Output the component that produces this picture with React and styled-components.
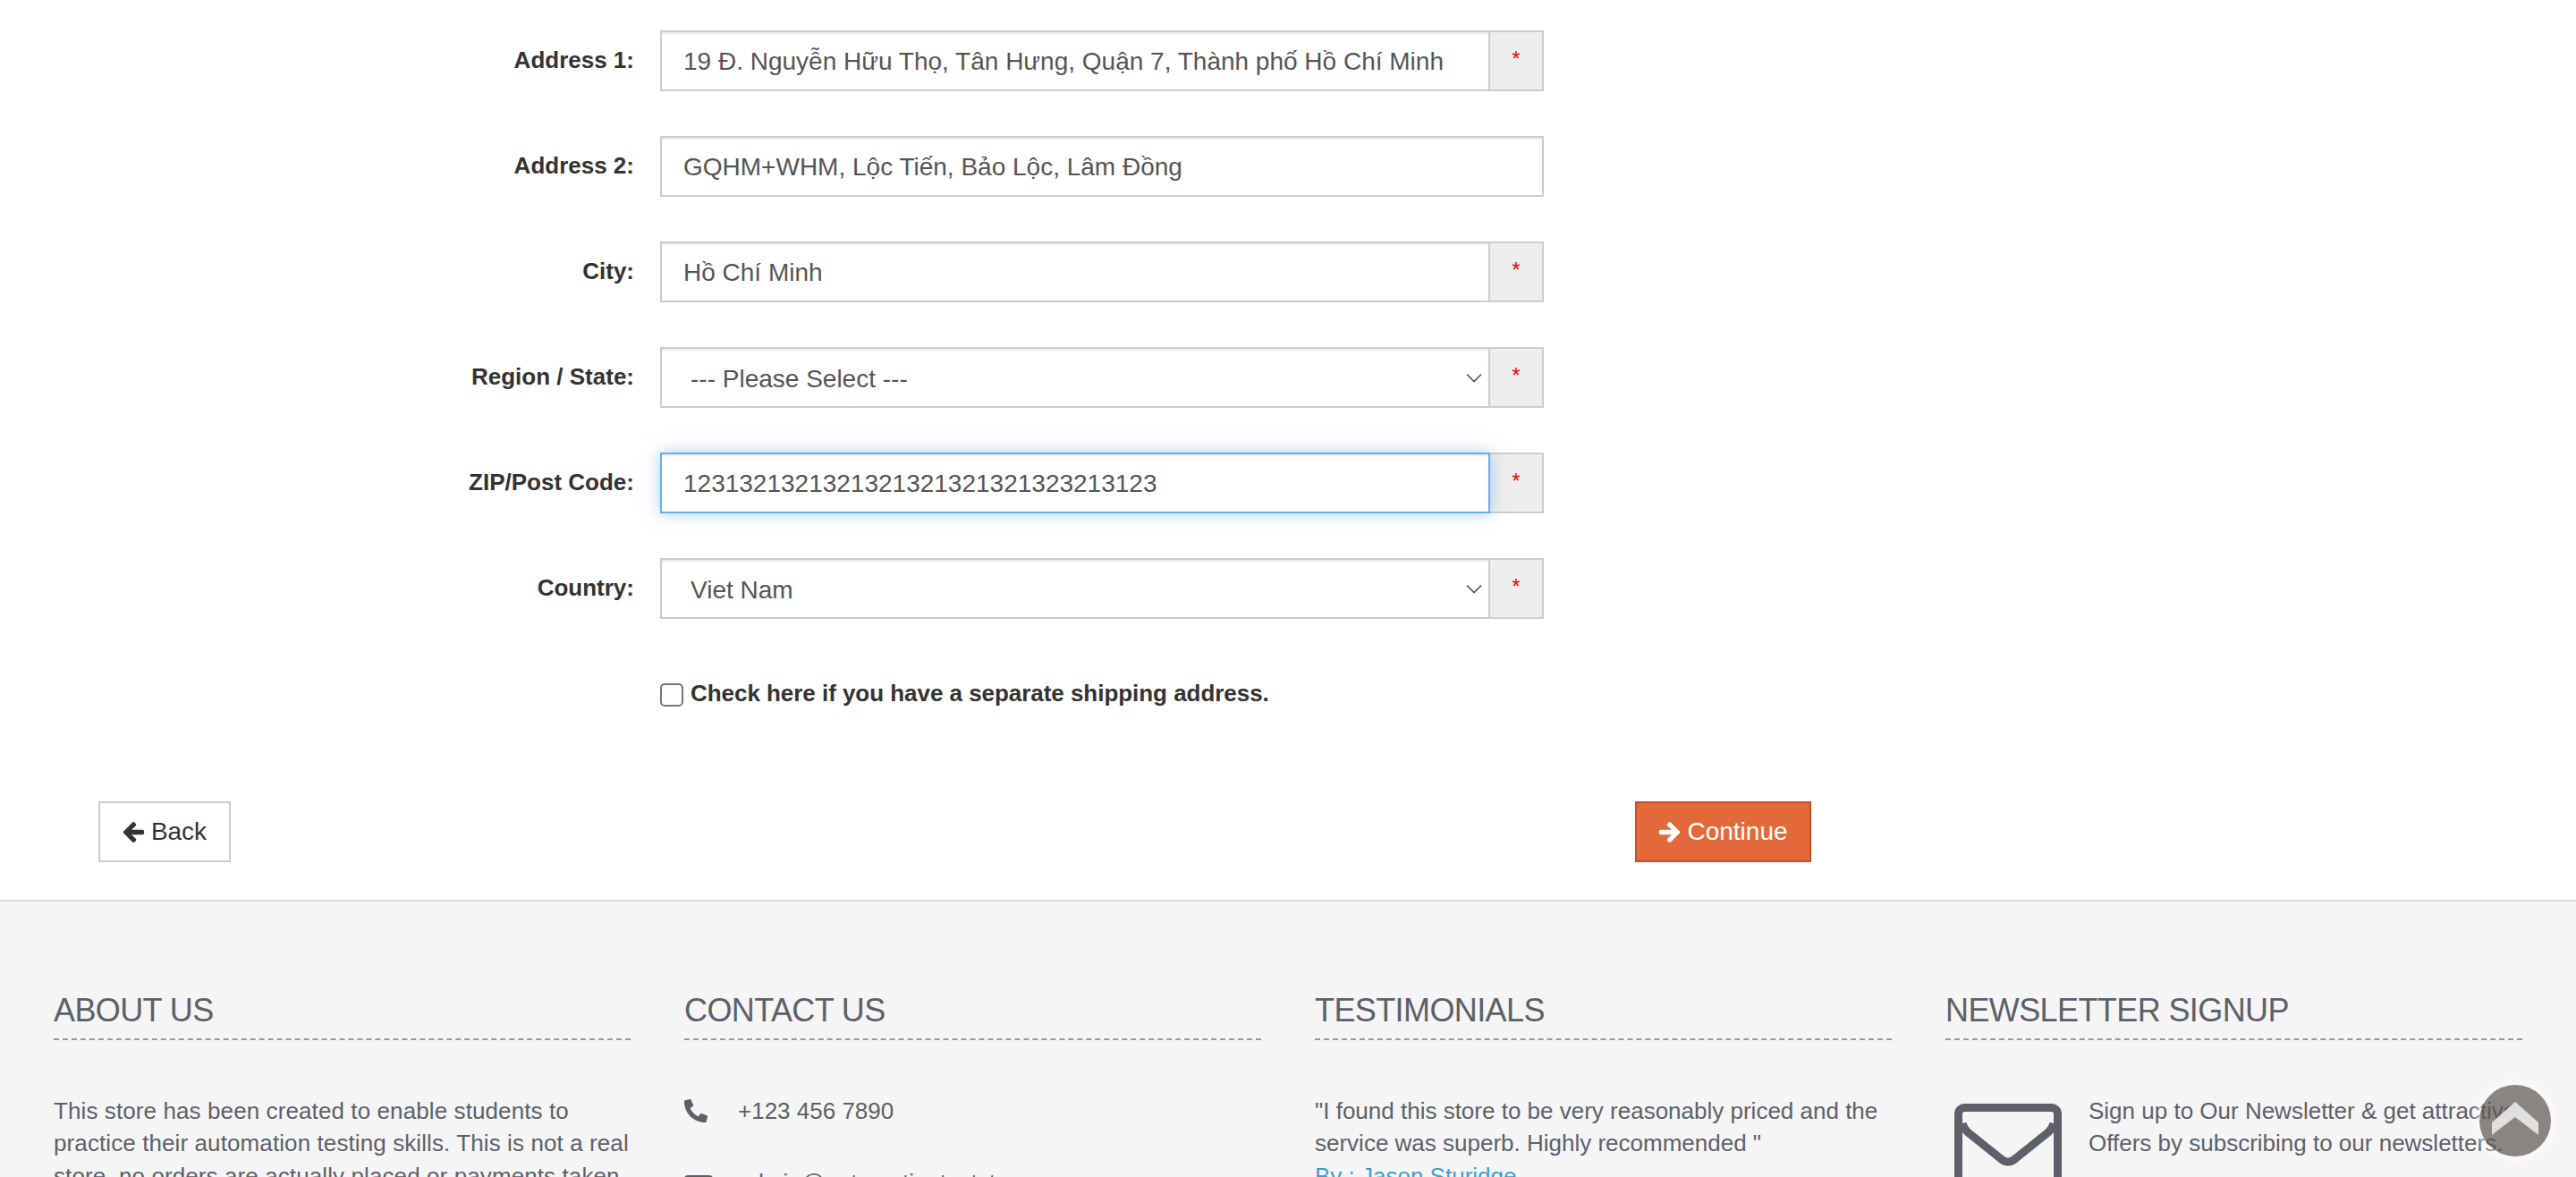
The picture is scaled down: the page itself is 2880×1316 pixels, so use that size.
import styled, { createGlobalStyle } from "styled-components";
import { FaArrowLeft, FaArrowRight, FaPhoneAlt } from "react-icons/fa";

const GlobalStyle = createGlobalStyle`
  html, body {
    margin: 0;
    padding: 0;
    background: #fff;
  }
  * {
    box-sizing: border-box;
  }
`;

const Page = styled.div`
  position: relative;
  width: 2880px;
  height: 1316px;
  overflow: hidden;
  font-family: "Liberation Sans", Arial, sans-serif;
  color: #333;
`;

const Form = styled.form`
  padding-top: 34px;
`;

const Row = styled.div`
  display: grid;
  grid-template-columns: 709px 988px;
  column-gap: 29px;
  align-items: center;
  height: 68px;
  margin-bottom: 50px;
`;

const Label = styled.label`
  text-align: right;
  font-size: 26px;
  font-weight: 700;
  color: #333;
  margin-top: -2px;
`;

const Group = styled.div`
  position: relative;
  display: flex;
  height: 68px;
`;

const Input = styled.input`
  flex: 1;
  min-width: 0;
  height: 68px;
  padding: 2px 24px 0;
  font-family: inherit;
  font-size: 28px;
  color: #555;
  background: #fff;
  border: 2px solid ${p => (p.$focused ? "#66afe9" : "#ccc")};
  box-shadow: ${p =>
    p.$focused
      ? "inset 0 2px 2px rgba(0,0,0,.075), 0 0 16px rgba(102,175,233,.6)"
      : "inset 0 2px 2px rgba(0,0,0,.075)"};
  border-radius: 0;
  outline: none;
  position: relative;
  z-index: ${p => (p.$focused ? 1 : 0)};
`;

const SelectBox = styled.div`
  position: relative;
  flex: 1;
  min-width: 0;
  height: 68px;
`;

const Select = styled.select`
  width: 100%;
  height: 68px;
  padding: 2px 24px 0 32px;
  appearance: none;
  font-family: inherit;
  font-size: 28px;
  color: #555;
  background: #fff;
  border: 2px solid #ccc;
  box-shadow: inset 0 2px 2px rgba(0,0,0,.075);
  border-radius: 0;
  outline: none;
`;

const Chevron = styled.svg`
  position: absolute;
  right: 9px;
  top: 29px;
  width: 18px;
  height: 11px;
  pointer-events: none;
`;

const Required = styled.span`
  flex: none;
  display: flex;
  justify-content: center;
  padding-top: 16px;
  margin-left: -2px;
  width: 62px;
  background: #eee;
  border: 2px solid #ccc;
  color: #f00;
  font-size: 24px;
  line-height: 28px;
`;

const CheckRow = styled.div`
  display: flex;
  align-items: center;
  margin: 72px 0 0 738px;
  height: 26px;
`;

const Check = styled.input`
  appearance: none;
  width: 26px;
  height: 26px;
  margin: 0 8px 0 0;
  background: #fff;
  border: 2px solid #767676;
  border-radius: 5px;
`;

const CheckLabel = styled.label`
  font-size: 26px;
  font-weight: 700;
  color: #333;
  margin-top: -3px;
  letter-spacing: -0.04px;
`;

const Buttons = styled.div`
  display: flex;
  justify-content: space-between;
  margin-top: 106px;
  padding: 0 855px 0 110px;
`;

const Button = styled.button`
  display: flex;
  align-items: center;
  justify-content: center;
  gap: 7px;
  height: 68px;
  width: ${p => (p.$primary ? "197px" : "148px")};
  padding: 0;
  font-family: inherit;
  font-size: 28px;
  color: ${p => (p.$primary ? "#fff" : "#333")};
  background: ${p => (p.$primary ? "#e26a3a" : "#fff")};
  border: 2px solid ${p => (p.$primary ? "#c94f26" : "#ccc")};
  border-radius: 0;

  svg {
    font-size: 25px;
    stroke: currentColor;
    stroke-width: 30px;
  }
`;

const Footer = styled.footer`
  margin-top: 42px;
  background: #f5f5f5;
  border-top: 2px solid #d9d9d9;
  padding: 101px 60px 0;
  display: grid;
  grid-template-columns: repeat(4, 645px);
  column-gap: 60px;
  color: #5d6069;
`;

const Heading = styled.h2`
  margin: 0 0 61px;
  height: 54px;
  font-size: 36px;
  line-height: 42px;
  font-weight: 400;
  letter-spacing: -0.6px;
  color: #5d6069;
  border-bottom: 2px dashed #999;
`;

const Text = styled.p`
  margin: 0;
  font-size: 26px;
  line-height: 36.4px;
`;

const AboutText = styled(Text)`
  letter-spacing: 0.1px;
`;

const ContactRow = styled.div`
  display: flex;
  align-items: center;
  height: 36px;
  margin-bottom: 44px;
  font-size: 26px;
`;

const ContactIcon = styled.span`
  display: flex;
  width: 60px;
  font-size: 26px;
`;

const MailIcon = styled.svg`
  flex: none;
  width: 32px;
  height: 32px;
  margin-top: 16px;
`;

const Author = styled.a`
  color: #3f9fc9;
  font-size: 26px;
  line-height: 36.4px;
  text-decoration: none;
`;

const Signup = styled.div`
  display: flex;
  gap: 30px;
  padding-left: 10px;
`;

const Envelope = styled.svg`
  flex: none;
  width: 120px;
  height: 120px;
  margin-top: 10px;
`;

const ScrollTop = styled.a`
  position: absolute;
  right: 28px;
  bottom: 23px;
  width: 80px;
  height: 80px;
  border-radius: 50%;
  background: rgba(92, 86, 80, 0.7);
  box-shadow: 0 0 5px 7px rgba(255, 255, 255, 0.35);
  display: flex;
  align-items: center;
  justify-content: center;
`;

const ChevronUp = styled.svg`
  width: 54px;
  height: 38px;
  margin-top: -5px;
`;

function Field({ label, value, focused, required = true }) {
  return (
    <Row>
      <Label>{label}</Label>
      <Group>
        <Input type="text" defaultValue={value} $focused={focused} />
        {required && <Required>*</Required>}
      </Group>
    </Row>
  );
}

function SelectField({ label, value }) {
  return (
    <Row>
      <Label>{label}</Label>
      <Group>
        <SelectBox>
          <Select defaultValue={value}>
            <option>{value}</option>
          </Select>
          <Chevron viewBox="0 0 18 11">
            <path d="M1 1.5 L9 9.5 L17 1.5" fill="none" stroke="#555" strokeWidth="1.6" />
          </Chevron>
        </SelectBox>
        <Required>*</Required>
      </Group>
    </Row>
  );
}

export default function App() {
  return (
    <Page>
      <GlobalStyle />
      <Form>
        <Field label="Address 1:" value="19 Đ. Nguyễn Hữu Thọ, Tân Hưng, Quận 7, Thành phố Hồ Chí Minh" />
        <Field label="Address 2:" value="GQHM+WHM, Lộc Tiến, Bảo Lộc, Lâm Đồng" required={false} />
        <Field label="City:" value="Hồ Chí Minh" />
        <SelectField label="Region / State:" value="--- Please Select ---" />
        <Field label="ZIP/Post Code:" value="1231321321321321321321321323213123" focused />
        <SelectField label="Country:" value="Viet Nam" />
        <CheckRow>
          <Check type="checkbox" />
          <CheckLabel>Check here if you have a separate shipping address.</CheckLabel>
        </CheckRow>
        <Buttons>
          <Button type="button">
            <FaArrowLeft /> Back
          </Button>
          <Button type="button" $primary>
            <FaArrowRight /> Continue
          </Button>
        </Buttons>
      </Form>
      <Footer>
        <section>
          <Heading>ABOUT US</Heading>
          <AboutText>
            This store has been created to enable students to practice their automation testing
            skills. This is not a real store, no orders are actually placed or payments taken.
          </AboutText>
        </section>
        <section>
          <Heading>CONTACT US</Heading>
          <ContactRow>
            <ContactIcon>
              <FaPhoneAlt />
            </ContactIcon>
            +123 456 7890
          </ContactRow>
          <ContactRow>
            <ContactIcon>
              <MailIcon viewBox="0 0 32 32">
                <rect width="32" height="32" rx="4" fill="#5d6069" />
              </MailIcon>
            </ContactIcon>
            admin@automationteststore.com
          </ContactRow>
        </section>
        <section>
          <Heading>TESTIMONIALS</Heading>
          <Text>"I found this store to be very reasonably priced and the service was superb. Highly recommended "</Text>
          <Author href="#">By : Jason Sturidge</Author>
        </section>
        <section>
          <Heading>NEWSLETTER SIGNUP</Heading>
          <Signup>
            <Envelope viewBox="0 0 120 120">
              <rect x="4.5" y="4.5" width="111" height="110" rx="7" fill="none" stroke="#5d6069" strokeWidth="9" />
              <path
                d="M9 22 Q10 27 15 32 L50 60 Q60 70 70 60 L105 32 Q110 27 111 22"
                fill="none"
                stroke="#5d6069"
                strokeWidth="9"
              />
            </Envelope>
            <Text>Sign up to Our Newsletter &amp; get attractive Offers by subscribing to our newsletters.</Text>
          </Signup>
        </section>
      </Footer>
      <ScrollTop href="#">
        <ChevronUp viewBox="0 0 54 38">
          <polygon points="27,0 53,23 53,37 27,17 1,37 1,23" fill="rgba(232,232,232,.92)" />
        </ChevronUp>
      </ScrollTop>
    </Page>
  );
}
